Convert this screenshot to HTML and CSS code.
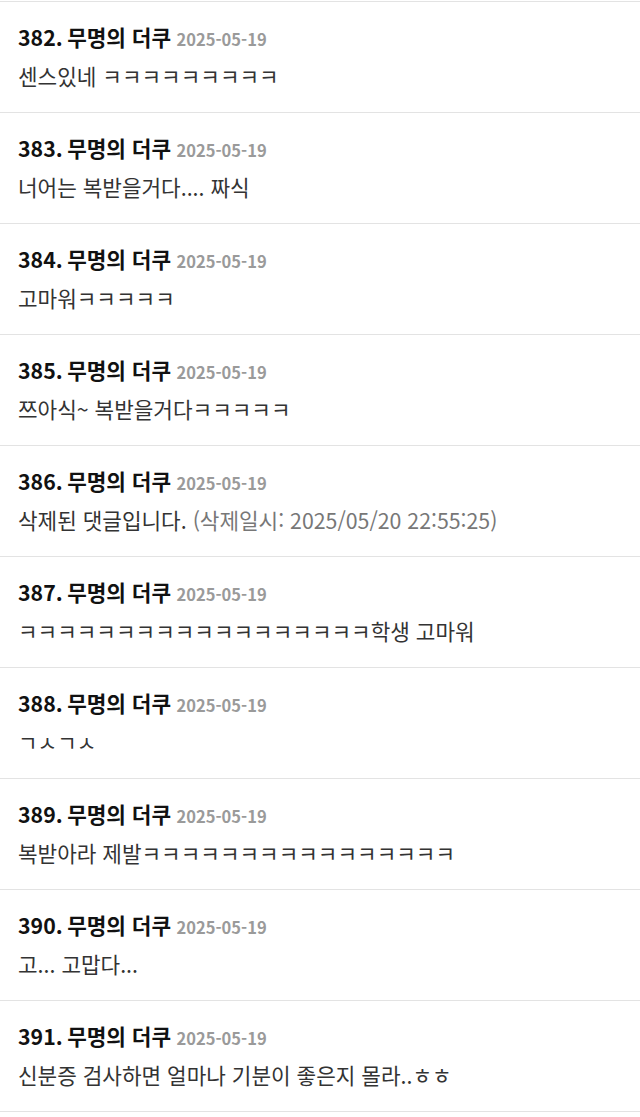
FILE: index.html
```html
<!DOCTYPE html>
<html lang="ko">
<head>
<meta charset="utf-8">
<link rel="stylesheet" href="styles.css">
</head>
<body>
<ul class="comments">
  <li class="comment"><div class="head"><span class="num">382.</span> <span class="name">무명의 더쿠</span> <span class="date">2025-05-19</span></div><p class="text">센스있네 ㅋㅋㅋㅋㅋㅋㅋㅋㅋ</p></li>
  <li class="comment"><div class="head"><span class="num">383.</span> <span class="name">무명의 더쿠</span> <span class="date">2025-05-19</span></div><p class="text">너어는 복받을거다.... 짜식</p></li>
  <li class="comment"><div class="head"><span class="num">384.</span> <span class="name">무명의 더쿠</span> <span class="date">2025-05-19</span></div><p class="text">고마워ㅋㅋㅋㅋㅋ</p></li>
  <li class="comment"><div class="head"><span class="num">385.</span> <span class="name">무명의 더쿠</span> <span class="date">2025-05-19</span></div><p class="text">쯔아식~ 복받을거다ㅋㅋㅋㅋㅋ</p></li>
  <li class="comment"><div class="head"><span class="num">386.</span> <span class="name">무명의 더쿠</span> <span class="date">2025-05-19</span></div><p class="text">삭제된 댓글입니다. <span class="deleted">(삭제일시: 2025/05/20 22:55:25)</span></p></li>
  <li class="comment"><div class="head"><span class="num">387.</span> <span class="name">무명의 더쿠</span> <span class="date">2025-05-19</span></div><p class="text">ㅋㅋㅋㅋㅋㅋㅋㅋㅋㅋㅋㅋㅋㅋㅋㅋㅋㅋ학생 고마워</p></li>
  <li class="comment"><div class="head"><span class="num">388.</span> <span class="name">무명의 더쿠</span> <span class="date">2025-05-19</span></div><p class="text">ㄱㅅㄱㅅ</p></li>
  <li class="comment"><div class="head"><span class="num">389.</span> <span class="name">무명의 더쿠</span> <span class="date">2025-05-19</span></div><p class="text">복받아라 제발ㅋㅋㅋㅋㅋㅋㅋㅋㅋㅋㅋㅋㅋㅋㅋㅋ</p></li>
  <li class="comment"><div class="head"><span class="num">390.</span> <span class="name">무명의 더쿠</span> <span class="date">2025-05-19</span></div><p class="text">고... 고맙다...</p></li>
  <li class="comment"><div class="head"><span class="num">391.</span> <span class="name">무명의 더쿠</span> <span class="date">2025-05-19</span></div><p class="text">신분증 검사하면 얼마나 기분이 좋은지 몰라..ㅎㅎ</p></li>
</ul>
</body>
</html>
```

FILE: styles.css
```css
html, body {
  margin: 0;
  padding: 0;
  background: #ffffff;
}
body {
  font-family: "Noto Sans CJK KR", "Noto Sans", sans-serif;
  color: #222;
}
.comments {
  list-style: none;
  margin: 0;
  padding: 1px 0 0 0;
}
.comment {
  border-top: 1px solid #e3e3e3;
  height: 110px;
  padding: 0 18px;
  box-sizing: content-box;
}
.comment:last-child {
  border-bottom: 1px solid #e3e3e3;
}
.head {
  padding-top: 22px;
  height: 26px;
  line-height: 26px;
  white-space: nowrap;
}
.num, .name {
  font-size: 21.3px;
  font-weight: 700;
  color: #111;
}
.date {
  font-size: 16.5px;
  font-weight: 700;
  color: #9a9a9a;
  margin-left: 1px;
}
.text {
  margin: 13px 0 0 0;
  font-size: 21.3px;
  line-height: 26px;
  color: #333;
  white-space: nowrap;
}
.deleted {
  color: #777;
}
```
